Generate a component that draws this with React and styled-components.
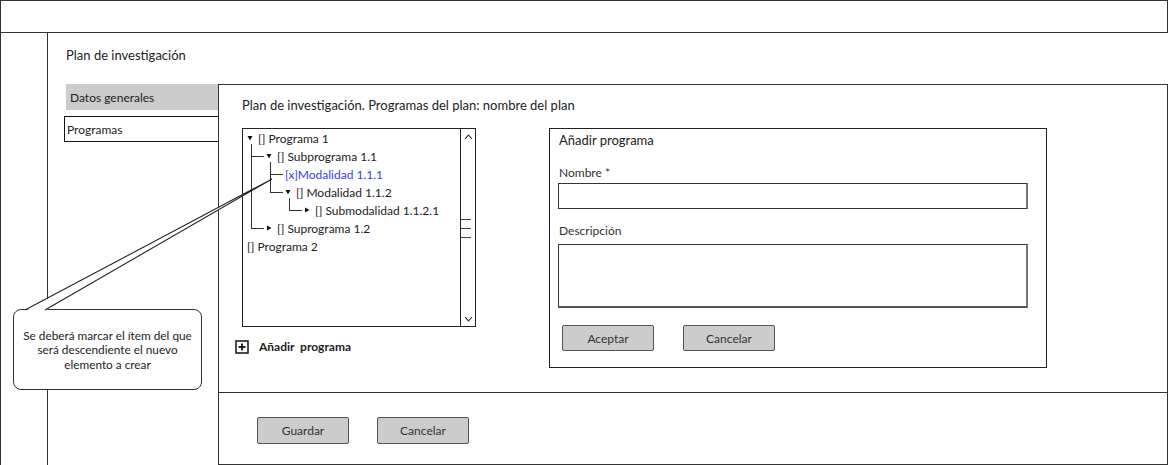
import React from "react";
import styled, { createGlobalStyle } from "styled-components";

const GlobalStyle = createGlobalStyle`
  html, body {
    margin: 0;
    padding: 0;
    background: #fff;
  }
  body {
    font-family: Lato, "Open Sans", "Liberation Sans", sans-serif;
    color: #222;
  }
  * { box-sizing: border-box; }
`;

const tree = [
  {
    label: "[] Programa 1",
    open: true,
    children: [
      {
        label: "[] Subprograma 1.1",
        open: true,
        children: [
          { label: "[x]Modalidad 1.1.1", selected: true },
          {
            label: "[] Modalidad 1.1.2",
            open: true,
            children: [{ label: "[] Submodalidad 1.1.2.1", open: false }],
          },
        ],
      },
      { label: "[] Suprograma 1.2", open: false },
    ],
  },
  { label: "[] Programa 2" },
];

const Toggle = ({ open }) => (
  <ToggleIcon width="6" height="6" viewBox="0 0 6 6">
    {open ? (
      <polygon points="0.5,1 5.5,1 3,5.5" fill="#111" />
    ) : (
      <polygon points="1,0.5 5.5,3 1,5.5" fill="#111" />
    )}
  </ToggleIcon>
);

const TreeNodes = ({ nodes, level }) => (
  <TreeList $level={level}>
    {nodes.map((n) => (
      <TreeItem key={n.label} $branch={level > 0}>
        <TreeRow $selected={n.selected}>
          {n.open !== undefined && <Toggle open={n.open} />}
          {n.label}
        </TreeRow>
        {n.children && n.open && <TreeNodes nodes={n.children} level={level + 1} />}
      </TreeItem>
    ))}
  </TreeList>
);

const Chevron = ({ up }) => (
  <svg width="9" height="6" viewBox="0 0 9 6">
    <polyline
      points={up ? "1,5 4.5,1 8,5" : "1,1 4.5,5 8,1"}
      fill="none"
      stroke="#222"
      strokeWidth="1.1"
    />
  </svg>
);

const PlusBox = () => (
  <svg width="14" height="14" viewBox="0 0 14 14">
    <rect x="1" y="1" width="12" height="12" fill="none" stroke="#111" strokeWidth="1.5" />
    <line x1="7" y1="3.5" x2="7" y2="10.5" stroke="#111" strokeWidth="1.8" />
    <line x1="3.5" y1="7" x2="10.5" y2="7" stroke="#111" strokeWidth="1.8" />
  </svg>
);

export default function App() {
  return (
    <>
      <GlobalStyle />
      <Frame>
        <TopBar />
        <Body>
          <Rail />
          <Main>
            <PageTitle>Plan de investigación</PageTitle>
            <Workspace>
              <Nav>
                <NavItem $active>Datos generales</NavItem>
                <NavItem $boxed>Programas</NavItem>
              </Nav>
              <Panel>
                <PanelBody>
                  <PanelTitle>
                    Plan de investigación. Programas del plan: nombre del plan
                  </PanelTitle>
                  <Columns>
                    <TreeColumn>
                      <TreeBox>
                        <TreeScroll>
                          <TreeNodes nodes={tree} level={0} />
                        </TreeScroll>
                        <ScrollBar>
                          <Chevron up />
                          <Thumb>
                            <ThumbLine />
                            <ThumbLine />
                            <ThumbLine />
                          </Thumb>
                          <Chevron />
                        </ScrollBar>
                      </TreeBox>
                      <AddLink>
                        <PlusBox />
                        <span>Añadir&nbsp; programa</span>
                      </AddLink>
                    </TreeColumn>
                    <FormBox>
                      <FormTitle>Añadir programa</FormTitle>
                      <FieldLabel $gap={17}>Nombre *</FieldLabel>
                      <TextInput />
                      <FieldLabel $gap={15}>Descripción</FieldLabel>
                      <TextArea />
                      <ButtonRow $gap={29}>
                        <Button>Aceptar</Button>
                        <Button>Cancelar</Button>
                      </ButtonRow>
                    </FormBox>
                  </Columns>
                </PanelBody>
                <PanelFooter>
                  <ButtonRow $gap={28}>
                    <Button $tall>Guardar</Button>
                    <Button $tall>Cancelar</Button>
                  </ButtonRow>
                </PanelFooter>
              </Panel>
            </Workspace>
          </Main>
        </Body>

        <Callout>
          Se deberá marcar el ítem del que
          <br />
          será descendiente el nuevo
          <br />
          elemento a crear
        </Callout>
        <CalloutTail viewBox="0 0 1168 465" width="1168" height="465">
          <polygon points="25,311 272,179 45,311" fill="#fff" />
          <polyline
            points="25,310 272,179 45,310"
            fill="none"
            stroke="#222"
            strokeWidth="1.1"
          />
        </CalloutTail>
      </Frame>
    </>
  );
}

const Frame = styled.div`
  position: relative;
  width: 1168px;
  height: 465px;
  display: flex;
  flex-direction: column;
  overflow: hidden;
`;

const TopBar = styled.div`
  height: 33px;
  border: 1px solid #333;
`;

const Body = styled.div`
  flex: 1;
  display: flex;
`;

const Rail = styled.div`
  width: 48px;
  border-left: 1px solid #333;
  border-right: 1px solid #333;
`;

const Main = styled.div`
  flex: 1;
  display: flex;
  flex-direction: column;
  padding-left: 18px;
`;

const PageTitle = styled.div`
  margin-top: 14px;
  font-size: 13px;
  line-height: 16px;
`;

const Workspace = styled.div`
  flex: 1;
  display: flex;
  margin-top: 21px;
`;

const Nav = styled.div`
  width: 152px;
  display: flex;
  flex-direction: column;
  gap: 6px;
  font-size: 12px;
`;

const NavItem = styled.div`
  height: 26px;
  display: flex;
  align-items: center;
  background: ${(p) => (p.$active ? "#cccccc" : "#fff")};
  padding-left: ${(p) => (p.$active ? "4px" : "2px")};
  border: ${(p) => (p.$boxed ? "1px solid #111" : "none")};
  margin-left: ${(p) => (p.$boxed ? "-2px" : "0")};
  width: ${(p) => (p.$boxed ? "155px" : "152px")};
`;

const Panel = styled.div`
  flex: 1;
  display: flex;
  flex-direction: column;
  border: 1px solid #333;
`;

const PanelBody = styled.div`
  height: 308px;
  border-bottom: 1px solid #333;
  padding: 12px 0 0 23px;
`;

const PanelTitle = styled.div`
  font-size: 13px;
  line-height: 16px;
`;

const Columns = styled.div`
  display: flex;
  align-items: flex-start;
  gap: 73px;
  margin-top: 15px;
`;

const TreeColumn = styled.div`
  display: flex;
  flex-direction: column;
`;

const TreeBox = styled.div`
  width: 234px;
  height: 199px;
  border: 1px solid #222;
  display: flex;
`;

const TreeScroll = styled.div`
  flex: 1;
  padding: 0 0 0 4px;
  font-size: 12px;
`;

const TreeList = styled.ul`
  list-style: none;
  margin: 0;
  padding: 0;
  margin-left: ${(p) => (p.$level === 0 ? 0 : 4)}px;
`;

const TreeItem = styled.li`
  position: relative;
  padding-left: ${(p) => (p.$branch ? 15 : 0)}px;

  ${(p) =>
    p.$branch &&
    `
    &::before {
      content: "";
      position: absolute;
      left: 0;
      top: -3px;
      width: 12px;
      height: 12px;
      border-left: 1px solid #333;
      border-bottom: 1px solid #333;
    }
    &:not(:last-child)::after {
      content: "";
      position: absolute;
      left: 0;
      top: 9px;
      bottom: 0;
      border-left: 1px solid #333;
    }
  `}
`;

const TreeRow = styled.div`
  height: 18px;
  display: flex;
  align-items: center;
  white-space: nowrap;
  color: ${(p) => (p.$selected ? "#3b3be6" : "#222")};
`;

const ToggleIcon = styled.svg`
  flex: none;
  margin-right: 5px;
`;

const ScrollBar = styled.div`
  width: 15px;
  border-left: 1px solid #222;
  display: flex;
  flex-direction: column;
  align-items: center;
  justify-content: space-between;
  padding: 5px 0 4px;
`;

const Thumb = styled.div`
  width: 100%;
  display: flex;
  flex-direction: column;
  gap: 8px;
`;

const ThumbLine = styled.div`
  width: 10px;
  height: 1px;
  background: #444;
`;

const AddLink = styled.div`
  display: flex;
  align-items: center;
  gap: 10px;
  margin: 12px 0 0 -7px;
  font-size: 12px;
  font-weight: 700;
  color: #222;
`;

const FormBox = styled.div`
  width: 498px;
  height: 240px;
  border: 1px solid #222;
  padding: 2px 0 0 9px;
`;

const FormTitle = styled.div`
  font-size: 13px;
  line-height: 18px;
`;

const FieldLabel = styled.div`
  font-size: 12px;
  line-height: 14px;
  color: #333;
  margin-top: ${(p) => p.$gap}px;
`;

const TextInput = styled.div`
  width: 470px;
  height: 26px;
  margin: 3px 0 0 -1px;
  border: 1px solid #333;
  border-right: 2px solid #777;
`;

const TextArea = styled.div`
  width: 470px;
  height: 64px;
  margin: 6px 0 0 -1px;
  border: 1px solid #333;
  border-right: 2px solid #777;
  border-bottom: 2px solid #555;
`;

const ButtonRow = styled.div`
  display: flex;
  gap: ${(p) => p.$gap}px;
  margin-top: 17px;
  margin-left: 3px;
`;

const Button = styled.div`
  width: 92px;
  height: ${(p) => (p.$tall ? 27 : 26)}px;
  display: flex;
  align-items: center;
  justify-content: center;
  background: #cccccc;
  border: 1px solid #555;
  border-radius: 2px;
  font-size: 12px;
  color: #333;
`;

const PanelFooter = styled.div`
  flex: 1;
  padding: 7px 0 0 35px;
`;

const Callout = styled.div`
  position: absolute;
  left: 13px;
  top: 309px;
  width: 189px;
  height: 81px;
  border: 1px solid #333;
  border-radius: 8px;
  background: #fff;
  display: flex;
  align-items: center;
  justify-content: center;
  text-align: center;
  font-size: 11.8px;
  line-height: 14.5px;
  color: #222;
  padding-top: 2px;
`;

const CalloutTail = styled.svg`
  position: absolute;
  left: 0;
  top: 0;
  pointer-events: none;
`;
